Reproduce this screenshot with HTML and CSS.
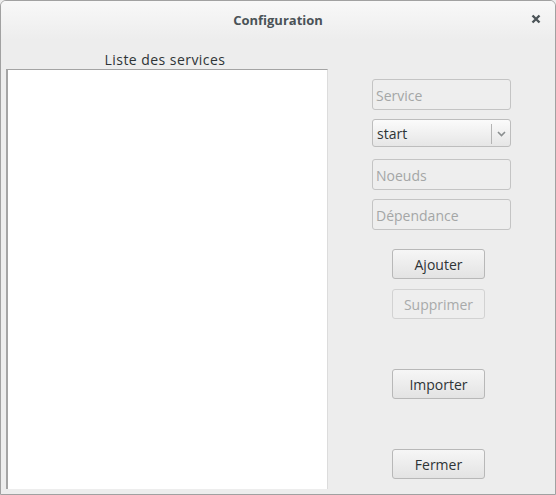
FILE: index.html
```html
<!DOCTYPE html>
<html lang="fr">
<head>
<meta charset="utf-8">
<title>Configuration</title>
<link rel="stylesheet" href="styles.css">
</head>
<body>
<div class="window">
  <div class="titlebar">
    <span class="title">Configuration</span>
    <span class="close" aria-label="Fermer">
      <svg width="10" height="10" viewBox="0 0 10 10"><path d="M1.5 1.5 L8.5 8.5 M8.5 1.5 L1.5 8.5" stroke="#4c5458" stroke-width="2.4" stroke-linecap="butt"/></svg>
    </span>
  </div>
  <div class="content">
    <div class="left">
      <div class="list-label">Liste des services</div>
      <div class="list"></div>
    </div>
    <div class="right">
      <div class="entry entry-service"><span class="ph">Service</span></div>
      <div class="combo">
        <span class="combo-text">start</span>
        <span class="combo-sep"></span>
        <svg class="combo-arrow" width="9" height="6" viewBox="0 0 9 6"><path d="M1 1 L4.5 4.5 L8 1" fill="none" stroke="#8a8e8f" stroke-width="1.6"/></svg>
      </div>
      <div class="entry entry-noeuds"><span class="ph">Noeuds</span></div>
      <div class="entry entry-dep"><span class="ph">Dépendance</span></div>
      <div class="btn btn-ajouter">Ajouter</div>
      <div class="btn btn-supprimer disabled">Supprimer</div>
      <div class="btn btn-importer">Importer</div>
      <div class="btn btn-fermer">Fermer</div>
    </div>
  </div>
</div>
</body>
</html>
```

FILE: styles.css
```css
html, body {
  margin: 0;
  padding: 0;
  background: #ededed;
}
body {
  font-family: "Open Sans", "DejaVu Sans", sans-serif;
  font-size: 13px;
  color: #2e3436;
}
.window {
  width: 556px;
  height: 495px;
  box-sizing: border-box;
  border: 1px solid #a1a1a1;
  border-radius: 6px 6px 0 0;
  background: #ededed;
  display: flex;
  flex-direction: column;
  overflow: hidden;
}
.titlebar {
  height: 39px;
  flex: none;
  position: relative;
  display: flex;
  align-items: center;
  justify-content: center;
  background: linear-gradient(#f8f8f8, #ededed);
}
.title {
  font-weight: bold;
  font-size: 13px;
  color: #4a5257;
  margin-top: -1px;
}
.close {
  position: absolute;
  right: 14px;
  top: 13px;
  width: 10px;
  height: 10px;
  display: flex;
}
.content {
  flex: 1;
  display: flex;
}
.left {
  margin-left: 5px;
  width: 322px;
  display: flex;
  flex-direction: column;
}
.list-label {
  margin-top: 11px;
  height: 18px;
  line-height: 18px;
  text-align: center;
  font-size: 14px;
  letter-spacing: 0.45px;
  color: #2e3436;
  padding-right: 4px;
}
.list {
  height: 420px;
  box-sizing: border-box;
  background: #fff;
  border-left: 2px solid #a4a4a4;
  border-top: 1px solid #a4a4a4;
  border-right: 1px solid #dcdcdc;
}
.right {
  margin-left: 44px;
  width: 140px;
  display: flex;
  flex-direction: column;
  align-items: flex-start;
}
.entry {
  width: 139px;
  height: 31px;
  box-sizing: border-box;
  border: 1px solid #c4c4c4;
  border-radius: 3px;
  background: #eeeeee;
  display: flex;
  align-items: center;
  padding-left: 3px;
  padding-top: 2px;
}
.ph {
  color: #a4a6a6;
  font-size: 14px;
}
.entry-service { margin-top: 39px; }
.entry-noeuds { margin-top: 12px; }
.entry-dep { margin-top: 9px; }
.combo {
  margin-top: 9px;
  width: 139px;
  height: 28px;
  box-sizing: border-box;
  border: 1px solid #bdbdbd;
  border-radius: 3px;
  background: linear-gradient(#fbfbfb, #e6e6e6);
  display: flex;
  align-items: center;
  padding-left: 4px;
  padding-top: 1px;
}
.combo-text {
  flex: 1;
  font-size: 14px;
  color: #2e3436;
}
.combo-sep {
  width: 1px;
  height: 20px;
  background: #b4b4b4;
  margin-right: 5px;
}
.combo-arrow {
  margin-right: 4px;
}
.btn {
  margin-left: 20px;
  width: 93px;
  height: 30px;
  box-sizing: border-box;
  border: 1px solid #b8b8b8;
  border-radius: 3px;
  background: linear-gradient(#f6f6f6, #e3e3e3);
  display: flex;
  align-items: center;
  justify-content: center;
  font-size: 14px;
  color: #2e3436;
}
.btn.disabled {
  border-color: #d2d2d2;
  background: #eeeeee;
  color: #a8aaaa;
}
.btn-ajouter { margin-top: 19px; }
.btn-supprimer { margin-top: 10px; }
.btn-importer { margin-top: 50px; }
.btn-fermer { margin-top: 50px; }
```
